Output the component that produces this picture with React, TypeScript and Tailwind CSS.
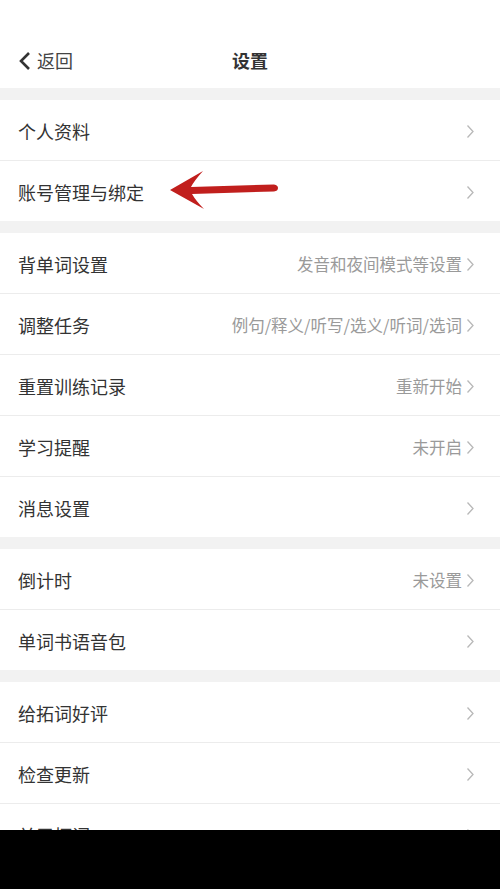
import React from 'react';

type Row = { label: string; value?: string; arrow?: boolean };

const sections: Row[][] = [
  [{ label: '个人资料' }, { label: '账号管理与绑定', arrow: true }],
  [
    { label: '背单词设置', value: '发音和夜间模式等设置' },
    { label: '调整任务', value: '例句/释义/听写/选义/听词/选词' },
    { label: '重置训练记录', value: '重新开始' },
    { label: '学习提醒', value: '未开启' },
    { label: '消息设置' },
  ],
  [{ label: '倒计时', value: '未设置' }, { label: '单词书语音包' }],
  [{ label: '给拓词好评' }, { label: '检查更新' }, { label: '关于拓词' }],
];

function Chevron() {
  return (
    <svg width="9" height="15" viewBox="0 0 9 15" className="ml-1 shrink-0">
      <path d="M1.5 1.5 L7 7.5 L1.5 13.5" fill="none" stroke="#b8b8b8" strokeWidth="1.3" />
    </svg>
  );
}

// the red pointer drawn over the account row
function RedArrow() {
  return (
    <svg
      width="130"
      height="50"
      viewBox="0 0 130 50"
      className="absolute left-[160px] top-[4px] pointer-events-none"
    >
      <path
        d="M10 25 L43 6 Q34 16 31 22 L114 19.5 Q118 20 118 23 Q118 26 114 26.5 L32 29 Q36 36 44 44 Z"
        fill="#c11f1d"
      />
    </svg>
  );
}

function SettingRow({ row }: { row: Row }) {
  return (
    <div className="relative flex h-[60px] shrink-0 items-center bg-white pl-[18px] pr-[25px] pt-[2px]">
      <span className="text-[18px] text-[#333333]">{row.label}</span>
      <div className="ml-auto flex items-center">
        {row.value && <span className="text-[16.5px] text-[#9a9a9a]">{row.value}</span>}
        <Chevron />
      </div>
      {row.arrow && <RedArrow />}
    </div>
  );
}

export default function App() {
  return (
    <div
      className="flex h-[889px] w-[500px] flex-col overflow-hidden bg-[#f2f2f2]"
      style={{ fontFamily: '"Noto Sans CJK SC", "Noto Sans", sans-serif' }}
    >
      <div className="relative flex h-[88px] shrink-0 items-end bg-white pb-[14px]">
        <div className="flex items-center pl-[18px]">
          <svg width="14" height="20" viewBox="0 0 14 20">
            <path d="M11 2 L3 10 L11 18" fill="none" stroke="#333333" strokeWidth="2.6" />
          </svg>
          <span className="ml-[5px] text-[18px] text-[#444444]">返回</span>
        </div>
        <div className="absolute inset-x-0 bottom-[14px] text-center text-[18px] font-bold text-[#333333]">
          设置
        </div>
      </div>

      <div className="flex flex-1 flex-col overflow-hidden">
        {sections.map((sec, i) => (
          <div key={i} className="mt-[12px] flex shrink-0 flex-col gap-px bg-[#ececec]">
            {sec.map((row) => (
              <SettingRow key={row.label} row={row} />
            ))}
          </div>
        ))}
      </div>

      <div className="h-[59px] shrink-0 bg-black" />
    </div>
  );
}
